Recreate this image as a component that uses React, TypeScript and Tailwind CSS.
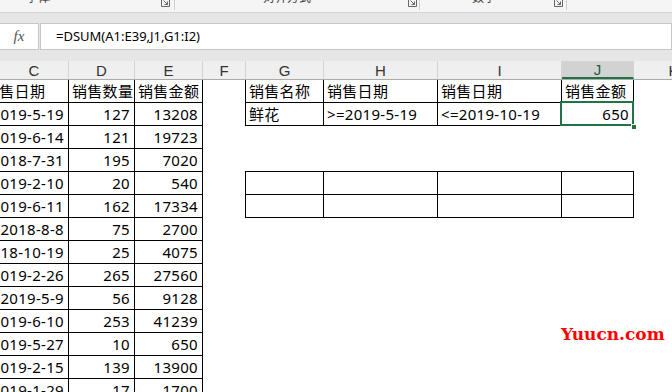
import React from "react";

const cjk = { fontFamily: '"Noto Sans", "Noto Sans CJK SC", sans-serif' };

const columns = [
  { key: "C", cls: "w-[88px] -ml-[19px]" },
  { key: "D", cls: "w-[66px]" },
  { key: "E", cls: "w-[68px]" },
  { key: "F", cls: "w-[43px]" },
  { key: "G", cls: "w-[78px]" },
  { key: "H", cls: "w-[114px]" },
  { key: "I", cls: "w-[124px]" },
  { key: "J", cls: "w-[72px]" },
  { key: "K", cls: "w-[80px]" },
];

const sales: [string, string, string][] = [
  ["2019-5-19", "127", "13208"],
  ["2019-6-14", "121", "19723"],
  ["2018-7-31", "195", "7020"],
  ["2019-2-10", "20", "540"],
  ["2019-6-11", "162", "17334"],
  ["2018-8-8", "75", "2700"],
  ["2018-10-19", "25", "4075"],
  ["2019-2-26", "265", "27560"],
  ["2019-5-9", "56", "9128"],
  ["2019-6-10", "253", "41239"],
  ["2019-5-27", "10", "650"],
  ["2019-2-15", "139", "13900"],
  ["2019-1-29", "17", "1700"],
];

const Launcher = () => (
  <svg width="9" height="9" viewBox="0 0 9 9" className="text-[#666]">
    <path d="M0.5 0.5 H8.5 V8.5 H0.5 Z" fill="none" stroke="currentColor" strokeWidth="1" />
    <path d="M2.5 2.5 L6.5 6.5 M6.5 3.5 V6.5 H3.5" fill="none" stroke="currentColor" strokeWidth="1" />
  </svg>
);

const Cell = ({
  cls,
  children,
  right,
  border,
  left,
  bottomOnly,
}: {
  cls: string;
  children?: React.ReactNode;
  right?: boolean;
  border?: boolean;
  left?: boolean;
  bottomOnly?: boolean;
}) => (
  <div
    className={`${cls} flex h-full shrink-0 items-center overflow-hidden whitespace-nowrap text-[15px] tracking-[0.3px] text-black ${
      right ? "justify-end pr-[4px]" : "pl-[3px]"
    } ${border ? "border-r border-b border-black" : ""} ${left ? "border-l border-black" : ""} ${
      bottomOnly ? "border-b border-black" : ""
    }`}
  >
    {children}
  </div>
);

export default function App() {
  const right: Record<number, string[] | "blank" | "edge"> = {
    0: ["销售名称", "销售日期", "销售日期", "销售金额"],
    1: ["鲜花", ">=2019-5-19", "<=2019-10-19", "650"],
    3: "edge",
    4: "blank",
    5: "blank",
  };

  const rows = [["销售日期", "销售数量", "销售金额"], ...sales];

  return (
    <div className="relative h-[392px] w-[672px] overflow-hidden bg-white" style={cjk}>
      {/* ribbon bottom */}
      <div className="relative h-[13px] border-b border-[#d5d5d5] bg-[#f5f5f5] text-[12px] text-[#444]">
        <span className="absolute left-[26px] -top-[10px] leading-[16px]">字体</span>
        <div className="absolute left-[161px] -top-[2px]">
          <Launcher />
        </div>
        <div className="absolute left-[174px] top-0 h-[10px] border-l border-[#d0d0d0]" />
        <span className="absolute left-[263px] -top-[10px] leading-[16px]">对齐方式</span>
        <div className="absolute left-[408px] -top-[2px]">
          <Launcher />
        </div>
        <div className="absolute left-[419px] top-0 h-[10px] border-l border-[#d0d0d0]" />
        <span className="absolute left-[472px] -top-[10px] leading-[16px]">数字</span>
        <div className="absolute left-[554px] -top-[2px]">
          <Launcher />
        </div>
        <div className="absolute left-[566px] top-0 h-[10px] border-l border-[#d0d0d0]" />
      </div>

      {/* formula bar */}
      <div className="flex h-[48px] items-center bg-[#e6e6e6] pb-px">
        <div className="flex h-[27px] w-[39px] items-center justify-center border-y border-r border-[#c6c6c6] bg-white">
          <span className="text-[15px] italic text-[#555]" style={{ fontFamily: '"Liberation Serif", serif' }}>
            fx
          </span>
        </div>
        <div className="ml-px flex h-[27px] flex-1 items-center border border-[#c6c6c6] bg-white pl-[15px] text-[13px] text-black">
          =DSUM(A1:E39,J1,G1:I2)
        </div>
      </div>

      {/* column headers */}
      <div className="flex h-[19px] border-b border-[#ababab] bg-[#efefef] text-[15px] text-[#333]">
        {columns.map((c) => (
          <div
            key={c.key}
            className={`${c.cls} flex shrink-0 items-center justify-center border-r border-[#d4d4d4] leading-none ${
              c.key === "J" ? "border-b-2 border-b-[#217346] bg-[#d2d2d2] text-[#1f5c39]" : ""
            } ${c.key === "C" ? "pl-[19px]" : ""}`}
            style={{ fontFamily: '"Liberation Sans", "Noto Sans", sans-serif' }}
          >
            {c.key}
          </div>
        ))}
      </div>

      {/* sheet body */}
      {rows.map((r, i) => {
        const rt = right[i];
        return (
          <div key={i} className="flex h-[23px]">
            <Cell cls={columns[0].cls} right={i > 0} border>
              {r[0]}
            </Cell>
            <Cell cls={columns[1].cls} right={i > 0} border>
              {r[1]}
            </Cell>
            <Cell cls={columns[2].cls} right={i > 0} border>
              {r[2]}
            </Cell>
            <Cell cls="w-[42px]" />
            {Array.isArray(rt) ? (
              <>
                <Cell cls="w-[79px]" border left>
                  {rt[0]}
                </Cell>
                <Cell cls={columns[5].cls} border>
                  {rt[1]}
                </Cell>
                <Cell cls={columns[6].cls} border>
                  {rt[2]}
                </Cell>
                <div className="relative h-full w-[72px] shrink-0">
                  <Cell cls="w-[72px]" border right={i === 1}>
                    {rt[3]}
                  </Cell>
                  {i === 1 && (
                    <>
                      <div className="pointer-events-none absolute -left-[2px] -top-[2px] h-[25px] w-[74px] border-2 border-[#217346]" />
                      <div className="absolute -right-[3px] -bottom-[4px] h-[6px] w-[6px] border border-white bg-[#217346]" />
                    </>
                  )}
                </div>
              </>
            ) : rt === "blank" ? (
              <>
                <Cell cls="w-[79px]" border left />
                <Cell cls={columns[5].cls} border />
                <Cell cls={columns[6].cls} border />
                <Cell cls="w-[72px]" border />
              </>
            ) : rt === "edge" ? (
              <>
                <Cell cls="w-[79px]" bottomOnly />
                <Cell cls={columns[5].cls} bottomOnly />
                <Cell cls={columns[6].cls} bottomOnly />
                <Cell cls="w-[72px]" bottomOnly />
              </>
            ) : null}
          </div>
        );
      })}

      {/* watermark */}
      <div
        className="absolute left-[561px] top-[326px] text-[20px] font-bold leading-none text-[#ff0000]"
        style={{ fontFamily: '"DejaVu Serif", "Liberation Serif", serif', fontSize: 17 }}
      >
        Yuucn.com
      </div>
    </div>
  );
}
